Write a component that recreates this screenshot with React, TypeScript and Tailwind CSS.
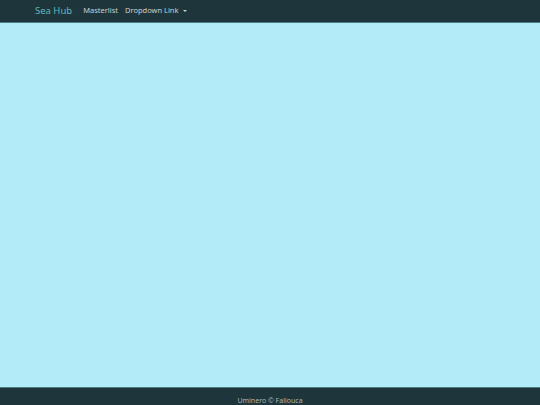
export default function App() {
  return (
    <div className="flex h-[405px] w-full flex-col overflow-hidden" style={{ fontFamily: "'Noto Sans', 'Open Sans', sans-serif" }}>
      {/* Navbar */}
      <nav className="flex h-[23px] shrink-0 items-center border-b border-[#4f7c82] bg-[#1e363b] pl-[35px]">
        <span className="mr-[11px] text-[9.5px] leading-none text-[#5fb7bf]">Sea Hub</span>
        <span className="mr-[7px] text-[7.5px] leading-none text-[#c9d1d1]">Masterlist</span>
        <span className="flex items-center text-[7.5px] leading-none text-[#c9d1d1]">
          Dropdown Link
          <span className="ml-[4px] inline-block h-0 w-0 border-x-[2px] border-t-[2.5px] border-x-transparent border-t-[#c9d1d1]"></span>
        </span>
      </nav>

      {/* Main */}
      <main className="flex-1 bg-[#b3ebf8]"></main>

      {/* Footer */}
      <footer className="flex h-[18px] shrink-0 justify-center border-t border-[#4f7c82] bg-[#1e363b] pt-[9px]">
        <span className="text-[7px] leading-none text-[#a9b5b6]">Uminero © Faliouca</span>
      </footer>
    </div>
  );
}
